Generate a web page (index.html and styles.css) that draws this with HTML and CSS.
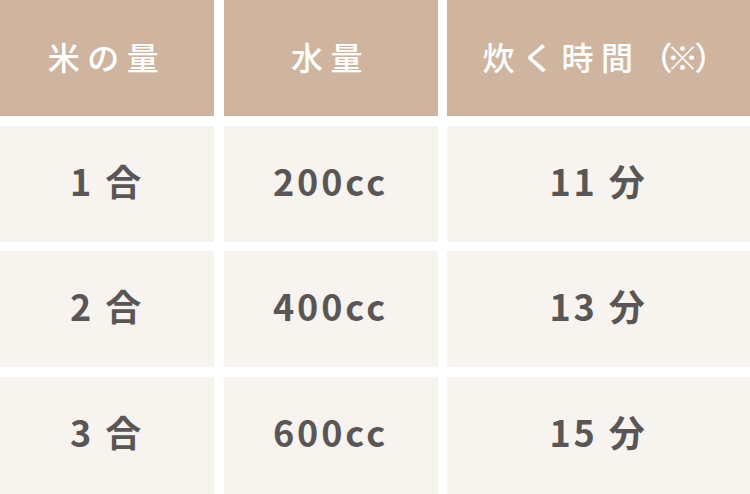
FILE: index.html
```html
<!DOCTYPE html>
<html lang="ja">
<head>
<meta charset="utf-8">
<link rel="stylesheet" href="styles.css">
</head>
<body>
<div class="table">
  <div class="cell head">米の量</div>
  <div class="cell head">水量</div>
  <div class="cell head">炊く時間<span class="note"><span class="p1">（</span><span class="p2">※</span><span class="p3">）</span></span></div>
  <div class="cell">1 合</div>
  <div class="cell">200cc</div>
  <div class="cell">11 分</div>
  <div class="cell">2 合</div>
  <div class="cell">400cc</div>
  <div class="cell">13 分</div>
  <div class="cell">3 合</div>
  <div class="cell">600cc</div>
  <div class="cell">15 分</div>
</div>
</body>
</html>
```
FILE: styles.css
```css
html, body {
  margin: 0;
  padding: 0;
  background: #ffffff;
}
.table {
  width: 750px;
  height: 494px;
  display: grid;
  grid-template-columns: 214px 214px 303px;
  grid-template-rows: 116px 116px 116px 117.5px;
  column-gap: 9.5px;
  row-gap: 9.5px;
  font-family: "Noto Sans CJK JP", "Noto Sans", sans-serif;
}
.cell {
  display: flex;
  align-items: center;
  justify-content: center;
  box-sizing: border-box;
  padding-bottom: 8px;
  background: #f7f4f0;
  color: #5b5656;
  font-size: 36px;
  font-weight: 700;
  letter-spacing: 0.08em;
  white-space: pre;
}
.head {
  background: #cfb5a0;
  color: #ffffff;
  font-size: 32px;
  font-weight: 500;
  letter-spacing: 7.5px;
  padding-bottom: 5px;
}
.note span {
  display: inline-block;
  letter-spacing: 0;
  text-align: left;
}
.note .p1 {
  width: 26px;
}
.note .p2 {
  width: 28px;
}
.note .p3 {
  width: 20px;
}
```
